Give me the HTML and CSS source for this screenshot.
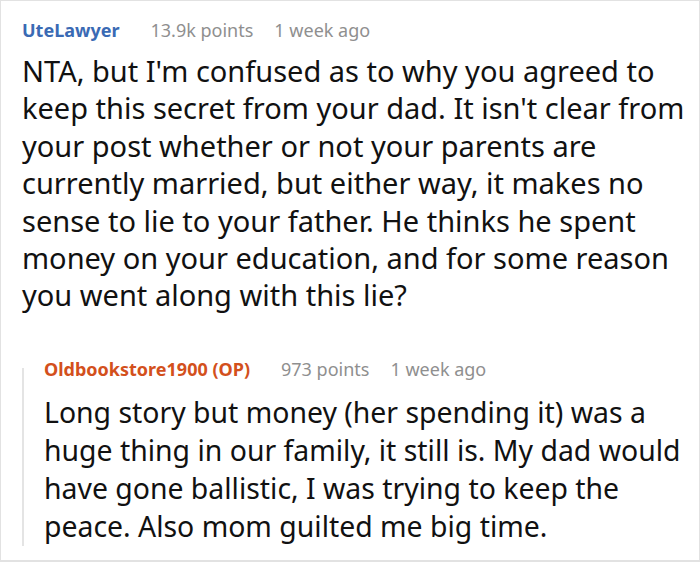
FILE: index.html
```html
<!DOCTYPE html>
<html>
<head>
<meta charset="utf-8">
<link rel="stylesheet" href="styles.css">
</head>
<body>
<div class="frame">
  <div class="comment">
    <div class="meta">
      <span class="user">UteLawyer</span>
      <span class="info">13.9k points</span>
      <span class="info">1 week ago</span>
    </div>
    <p class="body">NTA, but I'm confused as to why you agreed to keep this secret from your dad. It isn't clear from your post whether or not your parents are currently married, but either way, it makes no sense to lie to your father. He thinks he spent money on your education, and for some reason you went along with this lie?</p>
    <div class="reply">
      <div class="meta">
        <span class="user op">Oldbookstore1900 (OP)</span>
        <span class="info">973 points</span>
        <span class="info">1 week ago</span>
      </div>
      <p class="body">Long story but money (her spending it) was a huge thing in our family, it still is. My dad would have gone ballistic, I was trying to keep the peace. Also mom guilted me big time.</p>
    </div>
  </div>
</div>
</body>
</html>
```
FILE: styles.css
```css
html, body {
  margin: 0;
  padding: 0;
  background: #fff;
}
.frame {
  width: 700px;
  height: 562px;
  box-sizing: border-box;
  border: 1px solid #e2e2e2;
  border-bottom-width: 2px;
  overflow: hidden;
  font-family: "Noto Sans", sans-serif;
}
.comment {
  padding: 17px 8px 0 21px;
}
.meta {
  display: flex;
  font-size: 18px;
  line-height: 24px;
  align-items: baseline;
}
.user {
  font-weight: bold;
  color: #3a6ab4;
  margin-right: 31px;
}
.user.op {
  color: #d3501c;
}
.info {
  color: #8f8f8f;
  margin-right: 21px;
}
.body {
  margin: 10px 0 0 0;
  font-size: 29px;
  line-height: 37.4px;
  color: #111;
}
.reply {
  position: relative;
  margin-top: 43px;
  padding-left: 22px;
  padding-right: 9px;
}
.reply::before {
  content: "";
  position: absolute;
  left: 0;
  top: 11px;
  bottom: 0;
  width: 2px;
  background: #e4e4e4;
}
.reply .body {
  margin-top: 12px;
  font-size: 28.4px;
  line-height: 38.2px;
}
```
